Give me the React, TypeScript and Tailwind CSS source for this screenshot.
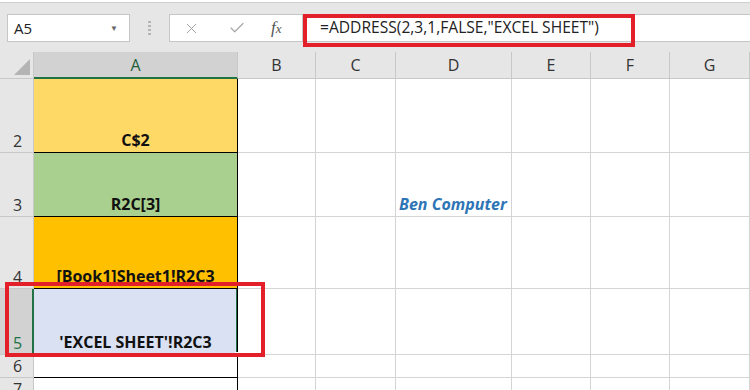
import { X, Check } from "lucide-react";

const cols = ["A", "B", "C", "D", "E", "F", "G"];
const colWidths = [204, 78, 80, 116, 79, 79, 80];

type Row = { num: string; h: number; fill?: string; text?: string };

const rows: Row[] = [
  { num: "2", h: 74, fill: "bg-[#ffd966]", text: "C$2" },
  { num: "3", h: 64, fill: "bg-[#a9d08e]", text: "R2C[3]" },
  { num: "4", h: 72, fill: "bg-[#ffc000]", text: "[Book1]Sheet1!R2C3" },
  { num: "5", h: 66, fill: "bg-[#d9e1f2]", text: "'EXCEL SHEET'!R2C3" },
  { num: "6", h: 23 },
  { num: "7", h: 23 },
];

function Toolbar() {
  return (
    <div className="h-[50px] bg-[#e6e6e6] border-t border-[#d0d0d0] mt-[2px] flex items-start pt-[11px] relative">
      {/* Name box */}
      <div className="ml-[7px] w-[123px] h-[28px] bg-white border border-[#c6c6c6] flex items-center justify-between px-[6px]">
        <span className="text-[15px] text-[#222]">A5</span>
        <span className="text-[8px] text-[#666] mr-[5px]">▼</span>
      </div>
      {/* dots */}
      <div className="w-[39px] h-[28px] flex flex-col items-center justify-center gap-[2px]">
        <span className="w-[3px] h-[2px] bg-[#b5b5b5]" />
        <span className="w-[3px] h-[2px] bg-[#b5b5b5]" />
        <span className="w-[3px] h-[2px] bg-[#b5b5b5]" />
        <span className="w-[3px] h-[2px] bg-[#b5b5b5]" />
      </div>
      {/* formula buttons */}
      <div className="w-[134px] h-[28px] bg-white border border-[#c6c6c6] flex items-center">
        <X size={17} strokeWidth={1.3} className="ml-[13px] text-[#9a9a9a]" />
        <Check size={18} strokeWidth={1.6} className="ml-[28px] text-[#a8a8a8]" />
        <span className="ml-[25px] text-[17px] italic text-[#555] font-['Liberation_Serif',serif]">
          f<span className="text-[13px]">x</span>
        </span>
      </div>
      {/* formula input */}
      <div className="flex-1 h-[28px] bg-white border-y border-[#c6c6c6] flex items-center pl-[17px]">
        <span className="text-[15.6px] text-[#222]">=ADDRESS(2,3,1,FALSE,"EXCEL SHEET")</span>
      </div>
      <div className="absolute left-[303px] top-[11px] w-[332px] h-[33px] border-[4px] border-[#e3202a]" />
    </div>
  );
}

export default function App() {
  return (
    <div className="w-[750px] h-[390px] overflow-hidden bg-white font-['Open_Sans',sans-serif] relative">
      <Toolbar />
      <div className="flex flex-col">
        {/* header row */}
        <div className="flex h-[27px]">
          <div className="w-[34px] shrink-0 bg-[#e6e6e6] border-r border-b border-[#c8c8c8] flex items-end justify-end p-[3px]">
            <div className="w-0 h-0 border-l-[16px] border-l-transparent border-b-[16px] border-b-[#b4b4b4]" />
          </div>
          {cols.map((c, i) => (
            <div
              key={c}
              style={{ width: colWidths[i] }}
              className={
                c === "A"
                  ? "shrink-0 bg-[#d2d2d2] border-b-2 border-[#217346] border-r border-r-[#c8c8c8] flex items-center justify-center text-[16px] text-[#1e5f38]"
                  : "shrink-0 bg-[#e6e6e6] border-r border-b border-[#c8c8c8] flex items-center justify-center text-[16px] text-[#333]"
              }
            >
              {c}
            </div>
          ))}
        </div>
        {rows.map((r) => (
          <div key={r.num} className="flex" style={{ height: r.h }}>
            <div
              className={
                r.num === "5"
                  ? "w-[34px] shrink-0 bg-[#d2d2d2] border-r-2 border-r-[#217346] border-b border-b-[#c8c8c8] flex items-end pl-[13px] text-[16px] leading-[22px] text-[#217346]"
                  : "w-[34px] shrink-0 bg-[#e6e6e6] border-r border-b border-[#c8c8c8] flex items-end pl-[13px] text-[16px] leading-[22px] text-[#333]"
              }
            >
              {r.num}
            </div>
            <div
              style={{ width: colWidths[0] }}
              className={`shrink-0 border-r border-b border-black flex items-end justify-center pb-[1px] text-[16px] leading-[22px] font-bold text-[#111] relative ${r.fill ?? "bg-white"}`}
            >
              {r.text}
              {r.num === "5" && (
                <>
                  <div className="absolute right-0 top-0 bottom-0 w-[1px] bg-[#217346]" />
                  <div className="absolute right-[-3px] bottom-[-3px] w-[5px] h-[5px] bg-[#217346] border border-white" />
                </>
              )}
            </div>
            {colWidths.slice(1).map((w, i) => (
              <div
                key={i}
                style={{ width: w }}
                className="shrink-0 border-r border-b border-[#d4d4d4] flex items-end pl-[3px] pb-[1px]"
              >
                {r.num === "3" && i === 2 && (
                  <span className="text-[16px] leading-[22px] font-bold italic text-[#2e75b6]">Ben Computer</span>
                )}
              </div>
            ))}
          </div>
        ))}
      </div>
      <div className="absolute left-[5px] top-[282px] w-[260px] h-[75px] border-[4px] border-[#e3202a]" />
    </div>
  );
}
